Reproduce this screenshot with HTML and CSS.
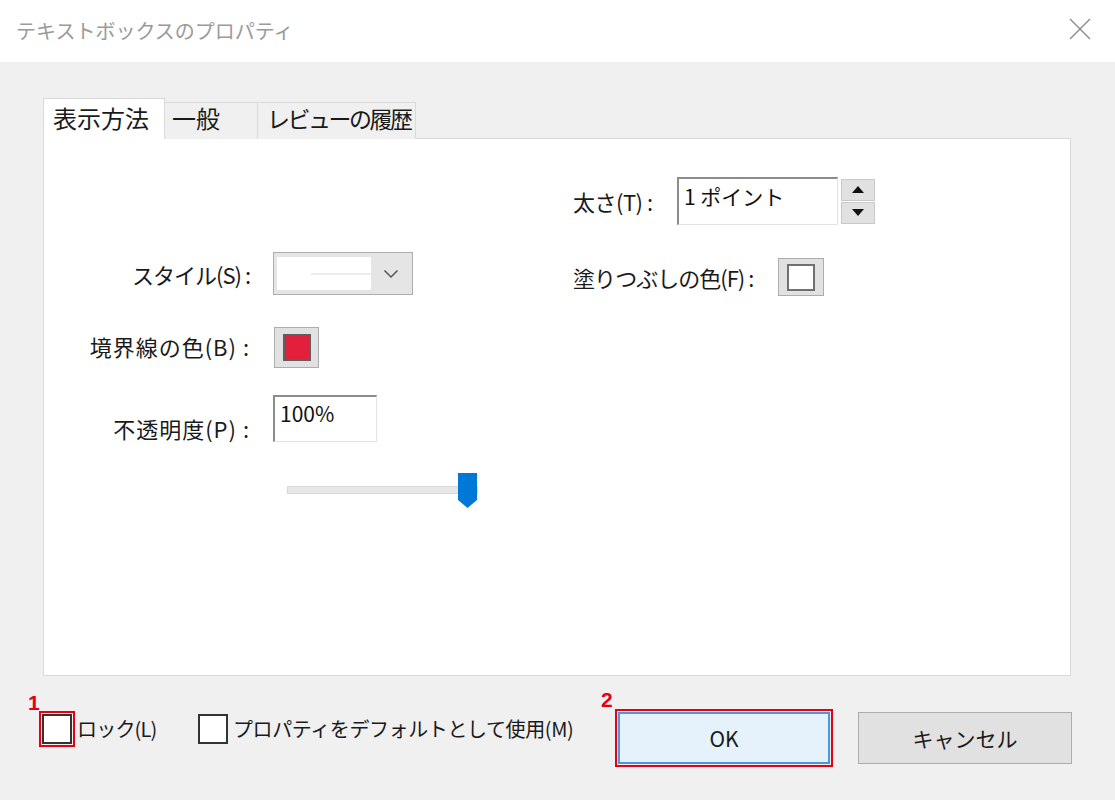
FILE: index.html
```html
<!DOCTYPE html>
<html lang="ja">
<head>
<meta charset="utf-8">
<title>テキストボックスのプロパティ</title>
<link rel="stylesheet" href="styles.css">
</head>
<body>
<div class="dialog">
  <div class="titlebar">
    <span class="title">テキストボックスのプロパティ</span>
    <svg class="close" width="22" height="22" viewBox="0 0 22 22"><path d="M1 1 L21 21 M21 1 L1 21" stroke="#8a8a8a" stroke-width="1.4" fill="none"/></svg>
  </div>
  <div class="body">
    <div class="tabs">
      <div class="tab tab-active tab-w1">表示方法</div>
      <div class="tab tab-w2">一般</div>
      <div class="tab tab-w3">レビューの履歴</div>
    </div>
    <div class="panel">
      <div class="col-left">
        <div class="row row-style">
          <span class="label-l ls-narrow">スタイル(S) :</span>
          <div class="select">
            <div class="select-field"><span class="select-line"></span></div>
            <div class="select-arrow"><svg width="16" height="10" viewBox="0 0 16 10"><path d="M1.5 1.5 L8 8 L14.5 1.5" stroke="#555" stroke-width="1.5" fill="none"/></svg></div>
          </div>
        </div>
        <div class="row row-border">
          <span class="label-l ls-wide">境界線の色(B) :</span>
          <div class="colorbtn colorbtn-border"><span class="swatch swatch-red"></span></div>
        </div>
        <div class="row row-opacity">
          <span class="label-l ls-wide">不透明度(P) :</span>
          <div class="input input-opacity">100%</div>
        </div>
        <div class="slider">
          <span class="track"></span>
          <svg class="thumb" width="19" height="35" viewBox="0 0 19 35"><path d="M0 0 H19 V27 L9.5 35 L0 27 Z" fill="#0078d7"/></svg>
        </div>
      </div>
      <div class="col-right">
        <div class="row row-thick">
          <span class="label-r label-thick">太さ(T) :</span>
          <div class="input input-thick">1 ポイント</div>
          <div class="spinner">
            <div class="spin"><svg width="12" height="7" viewBox="0 0 12 7"><path d="M0 7 L6 0 L12 7 Z" fill="#111"/></svg></div>
            <div class="spin"><svg width="12" height="7" viewBox="0 0 12 7"><path d="M0 0 L6 7 L12 0 Z" fill="#111"/></svg></div>
          </div>
        </div>
        <div class="row row-fill">
          <span class="label-r label-fill">塗りつぶしの色(F) :</span>
          <div class="colorbtn colorbtn-fill"><span class="swatch swatch-white"></span></div>
        </div>
      </div>
    </div>
    <div class="footer">
      <div class="check check-lock">
        <span class="badge">1</span>
        <span class="box box-marked"></span>
        <span class="check-label">ロック(L)</span>
      </div>
      <div class="check check-default">
        <span class="box"></span>
        <span class="check-label">プロパティをデフォルトとして使用(M)</span>
      </div>
      <div class="btn-wrap">
        <span class="badge badge-ok">2</span>
        <button class="btn btn-ok">OK</button>
      </div>
      <button class="btn btn-cancel">キャンセル</button>
    </div>
  </div>
</div>
</body>
</html>
```
FILE: styles.css
```css
html, body {
  margin: 0;
  padding: 0;
}
body {
  width: 1115px;
  height: 800px;
  background: #f0f0f0;
  font-family: "Noto Sans CJK JP", "Noto Sans", sans-serif;
  color: #1a1a1a;
  overflow: hidden;
}
.dialog {
  width: 1115px;
  height: 800px;
  display: flex;
  flex-direction: column;
}
.titlebar {
  height: 62px;
  background: #ffffff;
  display: flex;
  align-items: center;
  justify-content: space-between;
  padding: 0 24px 0 16px;
  box-sizing: border-box;
}
.title {
  font-size: 20px;
  line-height: 28px;
  color: #9a9a9a;
  margin-top: -1px;
}
.close {
  display: block;
  margin-top: -4px;
}
.body {
  padding: 36px 0 0 43px;
}
.tabs {
  display: flex;
  align-items: flex-end;
  height: 41px;
}
.tab {
  box-sizing: border-box;
  height: 37px;
  border-top: 1px solid #d9d9d9;
  border-right: 1px solid #d9d9d9;
  background: #f0f0f0;
  font-size: 24px;
  line-height: 30px;
  padding: 0 0 0 9px;
  color: #1a1a1a;
  white-space: nowrap;
}
.tab-active {
  position: relative;
  z-index: 1;
  height: 41px;
  background: #ffffff;
  border-left: 1px solid #d9d9d9;
  padding: 4px 0 0 9px;
}
.tab-w1 { width: 122px; }
.tab-w2 { width: 93px; padding-left: 7px; }
.tab-w3 { width: 158px; font-size: 23px; letter-spacing: -2.5px; }
.panel {
  box-sizing: border-box;
  width: 1028px;
  height: 538px;
  margin-top: -1px;
  background: #ffffff;
  border: 1px solid #d9d9d9;
  display: flex;
}
.col-left {
  width: 529px;
  padding-top: 113px;
}
.col-right {
  padding-top: 38px;
}
.row {
  display: flex;
  align-items: center;
}
.label-l {
  width: 206px;
  text-align: right;
  font-size: 22px;
  line-height: 28px;
  margin-right: 23px;
  white-space: nowrap;
}
.ls-narrow { letter-spacing: -1px; }
.ls-wide { letter-spacing: 1px; }
.label-r {
  font-size: 22px;
  line-height: 28px;
  white-space: nowrap;
}
.label-thick { width: 104px; letter-spacing: -0.5px; }
.label-fill { width: 205px; letter-spacing: -1px; }

.select {
  box-sizing: border-box;
  width: 140px;
  height: 43px;
  border: 1px solid #adadad;
  background: #e5e5e5;
  display: flex;
  padding: 4px 0 4px 3px;
}
.select-field {
  width: 94px;
  background: #ffffff;
  display: flex;
  align-items: center;
  justify-content: flex-end;
}
.select-line {
  width: 60px;
  height: 2px;
  background: #ececec;
  margin-top: 1px;
}
.select-arrow {
  flex: 1;
  display: flex;
  align-items: center;
  justify-content: center;
  padding-right: 2px;
}
.select-arrow svg { display: block; }

.row-border { margin-top: 32px; }
.row-border .label-l { margin-top: -3px; }
.colorbtn {
  box-sizing: border-box;
  border: 1px solid #adadad;
  background: #e1e1e1;
  display: flex;
  align-items: center;
  justify-content: center;
}
.colorbtn-border {
  width: 45px;
  height: 41px;
  margin-left: 1px;
}
.colorbtn-fill {
  width: 46px;
  height: 38px;
}
.swatch {
  box-sizing: border-box;
  width: 28px;
  height: 27px;
  border: 2px solid #5f5f5f;
}
.swatch-red { background: #e3203b; }
.swatch-white { background: #ffffff; border-color: #707070; }

.row-opacity {
  margin-top: 27px;
  align-items: flex-end;
}
.input {
  box-sizing: border-box;
  background: #ffffff;
  border-top: 2px solid #8c8c8c;
  border-left: 2px solid #8c8c8c;
  border-right: 1px solid #e3e3e3;
  border-bottom: 1px solid #e3e3e3;
  font-size: 21px;
  line-height: 26px;
  padding: 3px 0 0 5px;
  color: #111;
  white-space: nowrap;
}
.input-opacity {
  width: 104px;
  height: 47px;
}
.input-thick {
  width: 161px;
  height: 48px;
  padding-top: 4px;
}
.slider {
  display: grid;
  width: 191px;
  height: 35px;
  margin: 31px 0 0 243px;
}
.track, .thumb {
  grid-area: 1 / 1;
}
.track {
  box-sizing: border-box;
  align-self: start;
  margin-top: 13px;
  width: 191px;
  height: 8px;
  background: #e7e7e7;
  border: 1px solid #d6d6d6;
}
.thumb {
  justify-self: end;
  margin-right: 1px;
  display: block;
}

.spinner {
  margin-left: 3px;
  display: flex;
  flex-direction: column;
  gap: 1px;
}
.spin {
  box-sizing: border-box;
  width: 34px;
  height: 22px;
  background: #e1e1e1;
  border: 1px solid #c9c9c9;
  display: flex;
  align-items: center;
  justify-content: center;
}
.spin svg { display: block; }
.row-fill { margin-top: 33px; }

.footer {
  display: flex;
  align-items: flex-start;
  margin: 36px 0 0 -1px;
}
.check {
  position: relative;
  display: flex;
  align-items: center;
  padding-top: 2px;
}
.check-lock { width: 156px; }
.check-default { width: 420px; }
.box {
  box-sizing: border-box;
  width: 30px;
  height: 30px;
  border: 2px solid #333333;
  background: #ffffff;
  flex: none;
}
.box-marked {
  outline: 2px solid #e60012;
  outline-offset: 1px;
}
.check-label {
  font-size: 20px;
  line-height: 28px;
  margin-left: 5px;
  white-space: nowrap;
}
.check-lock .check-label { letter-spacing: -0.8px; }
.check-default .check-label { letter-spacing: -0.4px; }
.badge {
  position: absolute;
  left: -14px;
  top: -20px;
  font-family: "Liberation Sans", Arial, sans-serif;
  font-weight: bold;
  font-size: 21px;
  line-height: 21px;
  color: #e60012;
}
.btn-wrap {
  position: relative;
}
.badge-ok {
  left: -17px;
  top: -23px;
}
.btn {
  box-sizing: border-box;
  height: 52px;
  font-family: "Noto Sans CJK JP", "Noto Sans", sans-serif;
  font-size: 21px;
  color: #1a1a1a;
  padding: 0;
  margin: 0;
  display: block;
}
.btn-ok {
  width: 212px;
  background: #e5f1fb;
  border: 2px solid #4a97e0;
  outline: 2px solid #e60012;
  outline-offset: 1px;
}
.btn-cancel {
  width: 214px;
  margin-left: 28px;
  background: #e1e1e1;
  border: 1px solid #adadad;
}
```
